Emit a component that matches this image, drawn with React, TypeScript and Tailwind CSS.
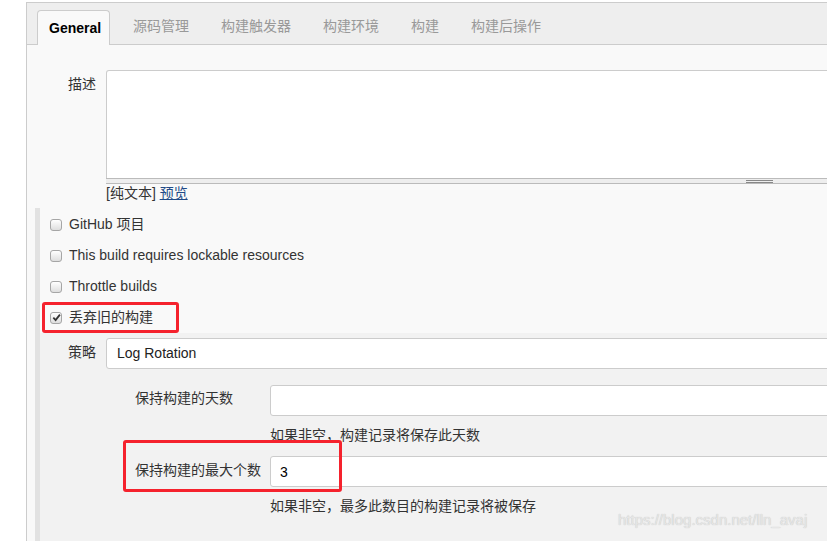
import { useState } from "react";

const FONT = { fontFamily: '"Liberation Sans", Arial, "Noto Sans CJK SC", sans-serif' };

const tabs = ["源码管理", "构建触发器", "构建环境", "构建", "构建后操作"];

type CheckRowProps = {
  label: string;
  checked?: boolean;
  highlight?: boolean;
};

function CheckRow(props: CheckRowProps) {
  const { label, checked, highlight } = props;
  return (
    <div className="relative flex h-[31px] items-center">
      <span className="ml-[10px] flex h-[12px] w-[12px] items-center justify-center rounded-[3px] border border-[#a6a6a6] bg-gradient-to-b from-white to-[#dedede]">
        {checked && (
          <svg width="9" height="9" viewBox="0 0 10 10">
            <path d="M1.5 5.2 L4 7.8 L8.8 1.8" fill="none" stroke="#333" strokeWidth="2" />
          </svg>
        )}
      </span>
      <span className="ml-[7px] text-[14px] text-[#333]">{label}</span>
      {/* annotation box drawn over the screenshot */}
      {highlight && (
        <div className="pointer-events-none absolute left-[2px] top-0 h-[31px] w-[137px] rounded-[3px] border-[3px] border-[#f5222d]" />
      )}
    </div>
  );
}

export default function App() {
  const [days, setDays] = useState("");
  const [max, setMax] = useState("3");

  return (
    <div className="relative h-[541px] w-[827px] overflow-hidden bg-white pt-[2px]" style={FONT}>
      <div className="ml-[26px] w-[900px] border border-[#ccc] bg-[#f9f9f9]">
        {/* tab bar */}
        <div className="flex h-[42px] items-end border-b border-[#ccc] bg-[#eee] pl-[10px]">
          <div className="-mb-px flex h-[35px] w-[73px] items-center rounded-t-[4px] border border-b-0 border-[#ccc] bg-[#f9f9f9] pl-[11px] text-[14px] font-bold text-black">
            General
          </div>
          <div className="ml-[23px] flex h-[35px] items-center gap-[32px] text-[14px] text-[#999]">
            {tabs.map((t) => (
              <span key={t}>{t}</span>
            ))}
          </div>
        </div>

        {/* description */}
        <div className="flex pt-[25px]">
          <div className="w-[79px] pr-[10px] pt-[4px] text-right text-[14px] leading-[20px] text-[#333]">描述</div>
          <div className="flex-1">
            <div className="h-[108px] rounded-tl-[3px] border border-b-0 border-[#ccc] bg-white" />
            <div className="flex h-[6px] items-center border-y border-[#bbb] bg-[#eee]">
              <div className="ml-[640px] flex w-[27px] flex-col gap-[1px]">
                <div className="h-px bg-[#888]" />
                <div className="h-px bg-[#888]" />
              </div>
            </div>
            <div className="mt-[1px] h-[16px] text-[14px] leading-[16px] text-[#333]">
              [纯文本] <a className="text-[#204a87] underline">预览</a>
            </div>
          </div>
        </div>

        {/* options */}
        <div className="ml-[8px] mt-[7px] border-l-[5px] border-[#e2e2e2] pt-px">
          <CheckRow label="GitHub 项目" />
          <CheckRow label="This build requires lockable resources" />
          <CheckRow label="Throttle builds" />
          <CheckRow label="丢弃旧的构建" checked highlight />

          <div className="bg-[#f2f2f2] pb-[40px] pt-[5px]">
            <div className="flex items-center">
              <div className="w-[66px] pb-[2px] pl-[28px] text-[14px] text-[#333]">策略</div>
              <div className="flex h-[31px] flex-1 items-center rounded-[3px] border border-[#ccc] bg-white pl-[10px] text-[14px] text-[#222]">
                Log Rotation
              </div>
            </div>

            <div className="mt-[16px] flex items-center">
              <div className="w-[230px] pb-[5px] pl-[95px] text-[14px] leading-[20px] text-[#333]">保持构建的天数</div>
              <input
                value={days}
                onChange={(e) => setDays(e.target.value)}
                className="h-[31px] flex-1 rounded-[3px] border border-[#ccc] bg-white px-[9px] text-[14px] outline-none"
              />
            </div>
            <div className="ml-[230px] mt-[11px] h-[16px] text-[14px] leading-[16px] text-[#333]">
              如果非空，构建记录将保存此天数
            </div>

            <div className="relative mt-[13px] flex items-center">
              <div className="w-[230px] pb-[4px] pl-[95px] text-[14px] leading-[20px] text-[#333]">保持构建的最大个数</div>
              <input
                value={max}
                onChange={(e) => setMax(e.target.value)}
                className="h-[31px] flex-1 rounded-[3px] border border-[#ccc] bg-white px-[9px] text-[14px] text-black outline-none"
              />
              <div className="pointer-events-none absolute left-[83px] top-[-16px] h-[52px] w-[219px] rounded-[3px] border-[3px] border-[#f5222d]" />
            </div>
            <div className="ml-[230px] mt-[11px] h-[16px] text-[14px] leading-[16px] text-[#333]">
              如果非空，最多此数目的构建记录将被保存
            </div>
          </div>
        </div>
      </div>

      {/* watermark */}
      <div className="absolute left-[618px] top-[509px] text-[15px] text-[#e6e6e6] [text-shadow:0_0_1px_#bbb]">
        https://blog.csdn.net/lln_avaj
      </div>
    </div>
  );
}
